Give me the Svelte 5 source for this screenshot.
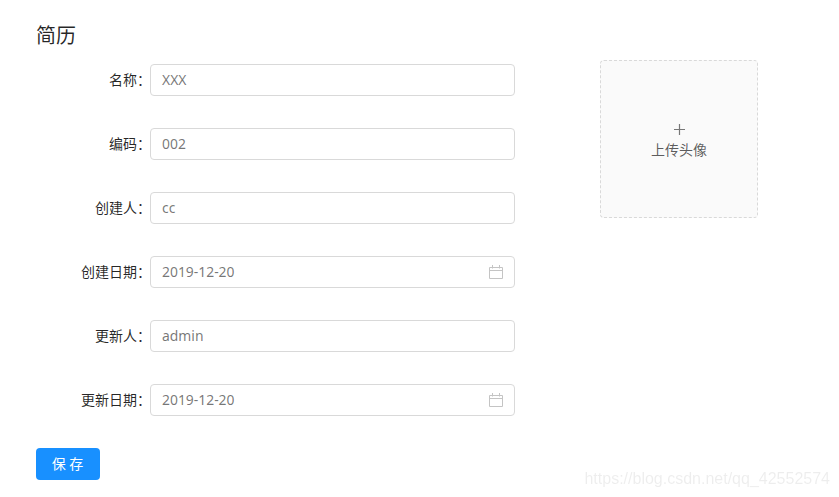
<script>
	const fields = [
		{ label: '名称', value: 'XXX' },
		{ label: '编码', value: '002' },
		{ label: '创建人', value: 'cc' },
		{ label: '创建日期', value: '2019-12-20', date: true },
		{ label: '更新人', value: 'admin' },
		{ label: '更新日期', value: '2019-12-20', date: true }
	];
</script>

<div class="page">
	<h2>简历</h2>
	<div class="body">
		<form class="fields">
			{#each fields as field}
				<div class="row">
					<span class="label">{field.label}：</span>
					<div class="input">
						<span class="value">{field.value}</span>
						{#if field.date}
							<svg width="14" height="14" viewBox="0 0 14 14" fill="none" stroke="#c4c4c4" stroke-width="1">
								<path d="M.5 2.5h13v11H.5z" />
								<path d="M.5 5.5h13" />
								<path d="M3.5 0v3.5M10.5 0v3.5" />
							</svg>
						{/if}
					</div>
				</div>
			{/each}
		</form>
		<div class="upload">
			<svg width="13" height="13" viewBox="0 0 13 13" stroke="#777" stroke-width="1.2">
				<path d="M6.5 1v11M1 6.5h11" />
			</svg>
			<span>上传头像</span>
		</div>
	</div>
	<button type="button" class="save"><span>保 存</span></button>
	<div class="watermark">https://blog.csdn.net/qq_42552574</div>
</div>

<style>
	:global(body) {
		margin: 0;
		background: #fff;
	}
	.page {
		position: relative;
		width: 839px;
		height: 497px;
		box-sizing: border-box;
		padding: 22px 36px 0;
		overflow: hidden;
		font-family: "Noto Sans", "Noto Sans CJK SC", sans-serif;
		font-size: 14px;
		color: rgba(0, 0, 0, 0.65);
	}
	h2 {
		margin: 0;
		font-size: 20px;
		line-height: 28px;
		font-weight: 400;
		color: rgba(0, 0, 0, 0.85);
	}
	.body {
		display: flex;
		align-items: flex-start;
		margin-top: 10px;
	}
	.fields {
		width: 479px;
		padding-top: 4px;
		display: flex;
		flex-direction: column;
		gap: 32px;
	}
	.row {
		display: flex;
		align-items: center;
		justify-content: flex-end;
	}
	.label {
		padding-bottom: 2px;
		margin-right: -1px;
		color: rgba(0, 0, 0, 0.85);
	}
	.input {
		width: 365px;
		height: 32px;
		box-sizing: border-box;
		padding: 0 11px;
		display: flex;
		align-items: center;
		justify-content: space-between;
		border: 1px solid #d9d9d9;
		border-radius: 4px;
	}
	.value {
		padding-bottom: 2px;
		font-size: 13.9px;
		color: rgba(0, 0, 0, 0.55);
	}
	.upload {
		width: 158px;
		height: 158px;
		box-sizing: border-box;
		margin-left: 85px;
		padding-top: 3px;
		display: flex;
		flex-direction: column;
		align-items: center;
		justify-content: center;
		gap: 3px;
		background: #fafafa;
		border: 1px dashed #d9d9d9;
		border-radius: 4px;
	}
	.save {
		display: block;
		width: 64px;
		height: 32px;
		margin-top: 32px;
		padding: 0 1px 2px 0;
		border: 0;
		border-radius: 4px;
		background: #1890ff;
		color: #fff;
		font: inherit;
	}
	.watermark {
		position: absolute;
		right: 9px;
		bottom: 9px;
		font-family: "Liberation Sans", sans-serif;
		font-size: 16px;
		color: rgba(0, 0, 0, 0.07);
		filter: blur(0.6px);
	}
</style>
